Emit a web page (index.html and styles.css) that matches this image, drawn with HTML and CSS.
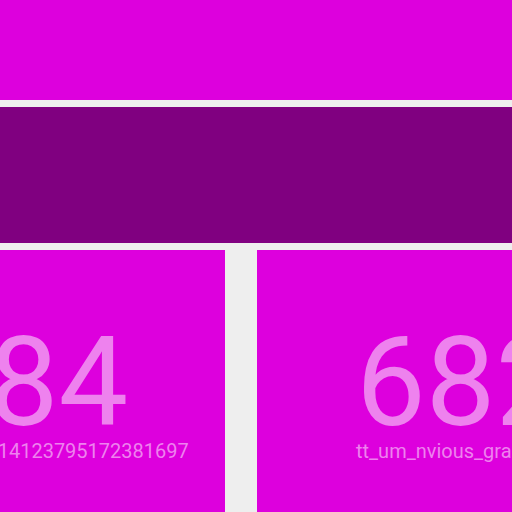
FILE: index.html
```html
<!DOCTYPE html>
<html>
<head>
<meta charset="utf-8">
<link rel="stylesheet" href="styles.css">
</head>
<body>
<div class="board">
  <div class="band band-top"></div>
  <div class="band band-mid"></div>
  <div class="cards">
    <div class="card">
      <div class="value">384</div>
      <div class="label">523088714123795172381697</div>
    </div>
    <div class="card">
      <div class="value">6823</div>
      <div class="label">tt_um_nvious_graphics</div>
    </div>
  </div>
</div>
</body>
</html>
```
FILE: styles.css
```css
html, body {
  margin: 0;
  padding: 0;
  background: #eeeeee;
  overflow: hidden;
  width: 512px;
  height: 512px;
}
.board {
  display: flex;
  flex-direction: column;
  gap: 7px;
  font-family: Roboto, "Liberation Sans", sans-serif;
}
.band {
  width: 512px;
}
.band-top {
  height: 100px;
  background: #dd00dd;
}
.band-mid {
  height: 136px;
  background: #800080;
}
.cards {
  display: flex;
  gap: 32px;
  margin-left: -180px;
}
.card {
  flex: 0 0 405px;
  height: 300px;
  background: #dd00dd;
  color: #ee82ee;
  box-sizing: border-box;
  padding: 72px 0 0 99px;
  display: flex;
  flex-direction: column;
  white-space: nowrap;
  overflow: hidden;
}
.value {
  font-size: 124px;
  line-height: 121px;
}
.label {
  font-size: 20px;
  line-height: 16px;
}
```
